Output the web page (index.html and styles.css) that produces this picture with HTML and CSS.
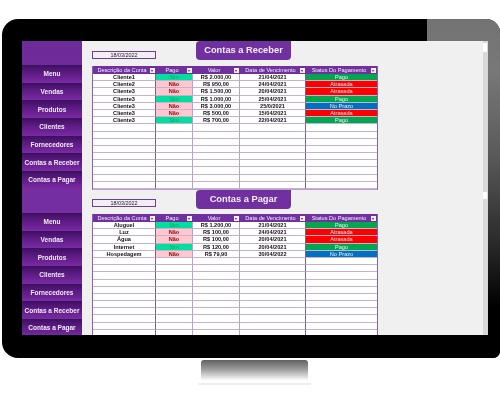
FILE: index.html
```html
<!DOCTYPE html>
<html lang="pt-BR">
<head>
<meta charset="utf-8">
<title>Contas</title>
<link rel="stylesheet" href="styles.css">
</head>
<body>
<div class="monitor">
  <div class="glare"></div>
  <div class="screen">
    <aside class="sidebar">
      <nav class="group">
        <a class="btn">Menu</a><a class="btn">Vendas</a><a class="btn">Produtos</a><a class="btn">Clientes</a><a class="btn">Fornecedores</a><a class="btn">Contas a Receber</a><a class="btn">Contas a Pagar</a>
      </nav>
      <nav class="group">
        <a class="btn">Menu</a><a class="btn">Vendas</a><a class="btn">Produtos</a><a class="btn">Clientes</a><a class="btn">Fornecedores</a><a class="btn">Contas a Receber</a><a class="btn">Contas a Pagar</a>
      </nav>
    </aside>
    <main class="main">
      <section class="sec">
        <header class="head">
          <div class="date">18/03/2022</div>
          <h1 class="title">Contas a Receber</h1>
        </header>
        <table class="tbl">
          <colgroup><col class="c1"><col class="c2"><col class="c3"><col class="c4"><col class="c5"></colgroup>
          <thead><tr>
            <th><div class="th">Descrição da Conta<i class="fb"></i></div></th>
            <th><div class="th">Pago<i class="fb"></i></div></th>
            <th><div class="th">Valor<i class="fb"></i></div></th>
            <th><div class="th">Data de Vencimento<i class="fb"></i></div></th>
            <th><div class="th">Status Do Pagamento<i class="fb"></i></div></th>
          </tr></thead>
          <tbody>
            <tr><td>Cliente1</td><td class="sim">Sim</td><td>R$ 2.000,00</td><td>21/04/2021</td><td class="pago">Pago</td></tr>
            <tr><td>Cliente2</td><td class="nao">Não</td><td>R$ 950,00</td><td>24/04/2021</td><td class="atr">Atrasada</td></tr>
            <tr><td>Cliente3</td><td class="nao">Não</td><td>R$ 1.500,00</td><td>20/04/2021</td><td class="atr">Atrasada</td></tr>
            <tr><td>Cliente3</td><td class="sim">Sim</td><td>R$ 1.000,00</td><td>25/04/2021</td><td class="pago">Pago</td></tr>
            <tr><td>Cliente3</td><td class="nao">Não</td><td>R$ 3.000,00</td><td>25/0/2021</td><td class="prazo">No Prazo</td></tr>
            <tr><td>Cliente3</td><td class="nao">Não</td><td>R$ 500,00</td><td>15/04/2021</td><td class="atr">Atrasada</td></tr>
            <tr><td>Cliente3</td><td class="sim">Sim</td><td>R$ 700,00</td><td>22/04/2021</td><td class="pago">Pago</td></tr>
            <tr><td></td><td></td><td></td><td></td><td></td></tr>
            <tr><td></td><td></td><td></td><td></td><td></td></tr>
            <tr><td></td><td></td><td></td><td></td><td></td></tr>
            <tr><td></td><td></td><td></td><td></td><td></td></tr>
            <tr><td></td><td></td><td></td><td></td><td></td></tr>
            <tr><td></td><td></td><td></td><td></td><td></td></tr>
            <tr><td></td><td></td><td></td><td></td><td></td></tr>
            <tr><td></td><td></td><td></td><td></td><td></td></tr>
            <tr><td></td><td></td><td></td><td></td><td></td></tr>
          </tbody>
        </table>
      </section>
      <section class="sec">
        <header class="head">
          <div class="date">18/03/2022</div>
          <h1 class="title">Contas a Pagar</h1>
        </header>
        <table class="tbl">
          <colgroup><col class="c1"><col class="c2"><col class="c3"><col class="c4"><col class="c5"></colgroup>
          <thead><tr>
            <th><div class="th">Descrição da Conta<i class="fb"></i></div></th>
            <th><div class="th">Pago<i class="fb"></i></div></th>
            <th><div class="th">Valor<i class="fb"></i></div></th>
            <th><div class="th">Data de Vencimento<i class="fb"></i></div></th>
            <th><div class="th">Status Do Pagamento<i class="fb"></i></div></th>
          </tr></thead>
          <tbody>
            <tr><td>Aluguel</td><td class="sim">Sim</td><td>R$ 1.200,00</td><td>21/04/2021</td><td class="pago">Pago</td></tr>
            <tr><td>Luz</td><td class="nao">Não</td><td>R$ 100,00</td><td>24/04/2021</td><td class="atr">Atrasada</td></tr>
            <tr><td>Água</td><td class="nao">Não</td><td>R$ 100,00</td><td>20/04/2021</td><td class="atr">Atrasada</td></tr>
            <tr><td>Internet</td><td class="sim">Sim</td><td>R$ 120,00</td><td>20/04/2021</td><td class="pago">Pago</td></tr>
            <tr><td>Hospedagem</td><td class="nao">Não</td><td>R$ 79,90</td><td>30/04/2022</td><td class="prazo">No Prazo</td></tr>
            <tr><td></td><td></td><td></td><td></td><td></td></tr>
            <tr><td></td><td></td><td></td><td></td><td></td></tr>
            <tr><td></td><td></td><td></td><td></td><td></td></tr>
            <tr><td></td><td></td><td></td><td></td><td></td></tr>
            <tr><td></td><td></td><td></td><td></td><td></td></tr>
            <tr><td></td><td></td><td></td><td></td><td></td></tr>
            <tr><td></td><td></td><td></td><td></td><td></td></tr>
            <tr><td></td><td></td><td></td><td></td><td></td></tr>
            <tr><td></td><td></td><td></td><td></td><td></td></tr>
            <tr><td></td><td></td><td></td><td></td><td></td></tr>
            <tr><td></td><td></td><td></td><td></td><td></td></tr>
          </tbody>
        </table>
      </section>
    </main>
    <div class="scrollbar"><span class="thumb one"></span><span class="thumb two"></span></div>
  </div>
</div>
<div class="stand"><div class="neck"></div><div class="base"></div></div>
</body>
</html>
```
FILE: styles.css
```css
* { box-sizing: border-box; }
html, body { margin: 0; height: 405px; overflow: hidden; background: #fff; }
body { font-family: "Liberation Sans", Arial, sans-serif; padding: 19px 0 0 2px; }

.monitor {
  position: relative;
  width: 498px;
  height: 339px;
  padding: 22px 12px 23px 20px;
  background: #000;
  border-radius: 16px 14px 7px 16px;
  overflow: hidden;
}
.glare {
  position: absolute;
  top: 0; right: 0;
  width: 73px;
  height: 100%;
  background: linear-gradient(to bottom, #737373 0%, #787878 15%, #5a5a5a 40%, #262626 68%, #000 85%);
}
.screen {
  position: relative;
  display: flex;
  height: 294px;
  overflow: hidden;
  background: #f0f0f0;
  filter: blur(0.3px);
}

.sidebar { width: 60px; flex: none; background: linear-gradient(to bottom, #6f2a9a, #7a30a8); }
.group { display: flex; flex-direction: column; padding-top: 24px; }
.btn {
  display: flex;
  align-items: center;
  justify-content: center;
  height: 17.7px;
  font-size: 6.5px;
  font-weight: bold;
  color: #f0e9f5;
  white-space: nowrap;
  background: linear-gradient(to bottom, #3d0f60 0%, #5a1a80 40%, #7a2aa4 100%);
}

.main { flex: 1; min-width: 0; padding-left: 10px; }
.sec { display: flex; flex-direction: column; }
.head { display: flex; align-items: flex-start; height: 25px; }
.sec + .sec .head { height: 24px; }
.date {
  width: 64px;
  height: 8px;
  margin-top: 10px;
  border: 1px solid #6f3f8f;
  background: #f3eef5;
  color: #222;
  font-size: 5.4px;
  line-height: 6px;
  text-align: center;
}
.sec + .sec .date { margin-top: 9px; }
.title {
  width: 95px;
  height: 19px;
  margin: 0 0 0 40px;
  border-radius: 4px 0 4px 4px;
  background: #7030a0;
  color: #f4eff7;
  font-size: 9.3px;
  font-weight: bold;
  line-height: 18px;
  text-align: center;
}

.tbl {
  width: 286px;
  table-layout: fixed;
  border-collapse: separate;
  border-spacing: 0;
  border-right: 1px solid #8a62a5;
  border-bottom: 1px solid #b9a2c8;
  border-left: 1px solid #8a62a5;
  background: #fff;
}
.c1 { width: 63px; } .c2 { width: 37px; } .c3 { width: 47px; } .c4 { width: 66px; } .c5 { width: 71px; }
th {
  height: 8px;
  padding: 0;
  background: #7030a0;
  color: #f4eff7;
  font-size: 5.6px;
  font-weight: normal;
  line-height: 7px;
}
.th {
  display: grid;
  grid-template-columns: 1fr auto;
  align-items: center;
  padding: 0 1px;
  white-space: nowrap;
  text-align: center;
}
.fb {
  position: relative;
  width: 5px;
  height: 5px;
  background: #f0f0f0;
}
.fb::after {
  content: "";
  position: absolute;
  top: 2px; left: 1px;
  border: 1.5px solid transparent;
  border-top: 2px solid #333;
  border-bottom: 0;
}
td {
  height: 7.2px;
  padding: 0;
  border-bottom: 1px solid #c4b2d0;
  border-right: 1px solid #b9a2c8;
  font-size: 5.6px;
  font-weight: bold;
  line-height: 6px;
  text-align: center;
  color: #111;
  white-space: nowrap;
  overflow: hidden;
}
td:first-child, td:nth-child(4) { border-right-color: #7d6090; }
td:last-child { border-right: 0; }
.sim { background: #00dfa0; color: #0a9a5c; font-weight: normal; }
.nao { background: #ffc7ce; color: #9c0006; }
.pago { background: #00a650; color: #e4f9ec; font-weight: normal; }
.atr { background: #ff0000; color: #ffe4e4; font-weight: normal; }
.prazo { background: #0070c0; color: #e6f2fb; font-weight: normal; }

.scrollbar {
  display: flex;
  flex-direction: column;
  width: 5px;
  flex: none;
  background: #d8d8d8;
}
.thumb { width: 4px; background: #fff; }
.thumb.one { height: 9px; margin-top: 2px; }
.thumb.two { height: 7px; margin-top: 140px; }

.stand { width: 113px; margin: 2px 0 0 196px; }
.neck {
  height: 20px;
  margin: 0 3px;
  border-radius: 3px 3px 0 0;
  background: linear-gradient(to bottom, #606060 0%, #9a9a9a 45%, #fafafa 100%);
}
.base { height: 2px; margin-top: 3px; background: #eeeeee; }
```
